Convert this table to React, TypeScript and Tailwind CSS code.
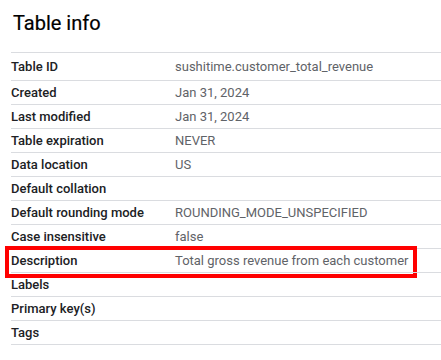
const rows: [string, string][] = [
  ['Table ID', 'sushitime.customer_total_revenue'],
  ['Created', 'Jan 31, 2024'],
  ['Last modified', 'Jan 31, 2024'],
  ['Table expiration', 'NEVER'],
  ['Data location', 'US'],
  ['Default collation', ''],
  ['Default rounding mode', 'ROUNDING_MODE_UNSPECIFIED'],
  ['Case insensitive', 'false'],
  ['Description', 'Total gross revenue from each customer'],
  ['Labels', ''],
  ['Primary key(s)', ''],
  ['Tags', ''],
]

export default function App() {
  return (
    <div className="h-[360px] w-[441px] bg-white pl-[11px] font-['Roboto',sans-serif]">
      <h1 className="pt-[9px] pl-[2px] text-[20px] leading-[28px] font-normal text-black [-webkit-text-stroke:0.2px_black]">
        Table info
      </h1>
      <div className="mt-[15px] border-b border-[#dadce0]">
        {rows.map(([label, value], i) => (
          <div
            key={label}
            className={`relative flex items-center border-t border-[#dadce0] text-[13px] ${i === 0 ? 'h-[28px]' : 'h-[24px]'}`}
          >
            <div className="w-[164px] shrink-0 font-medium text-[#202124]">{label}</div>
            <div className="text-[#5f6368]">{value}</div>
            {label === 'Description' && (
              <div className="pointer-events-none absolute -top-[3px] -left-[6px] h-[32px] w-[412px] border-4 border-[#ff0000]" />
            )}
          </div>
        ))}
      </div>
    </div>
  )
}
